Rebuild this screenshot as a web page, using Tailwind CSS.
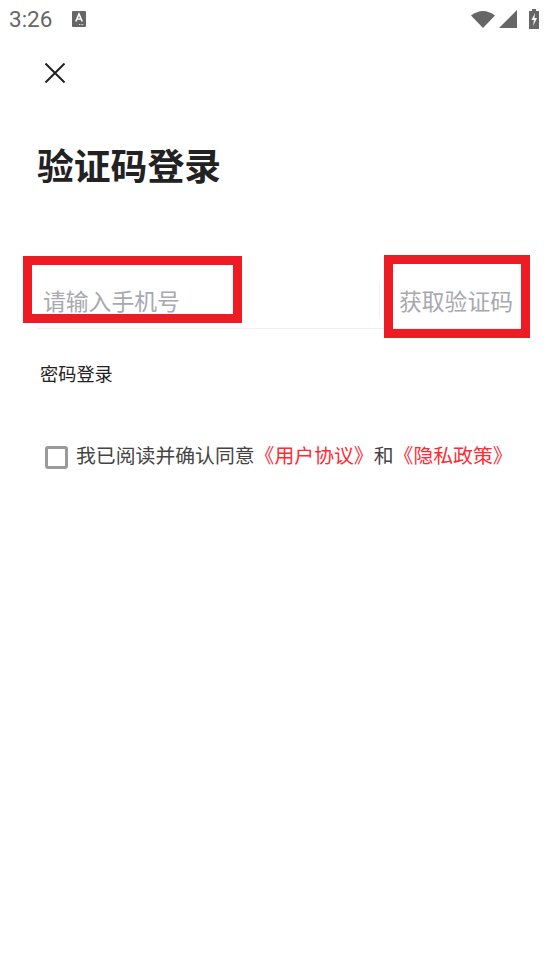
<!DOCTYPE html>
<html lang="zh"><head><meta charset="utf-8">
<script src="https://cdn.jsdelivr.net/npm/@tailwindcss/browser@4"></script>
</head>
<body class="bg-white">
<div class="relative w-[550px] h-[979px] overflow-hidden bg-white font-['Roboto','Noto_Sans_CJK_SC',sans-serif]">
  <div class="h-[38px] flex items-center pl-[9px] pr-[11px] text-[#666666]">
    <span class="text-[22.500px] leading-[38px] w-[63px]">3:26</span>
    <svg width="14" height="16" viewBox="0 0 14 16" class="mt-[-1px]"><rect width="14" height="16" rx="1" fill="#666"/><path d="M3.800 10.500 7 3l3.200 7.500M5 8h4" fill="none" stroke="#fff" stroke-width="1.600"/><path d="M7 13.500h5" stroke="#ddd" stroke-width="1.200" stroke-dasharray="1 .6"/></svg>
    <div class="ml-auto flex items-center gap-[4px]">
      <svg width="24" height="18" viewBox="0 0 24 18"><path d="M0 5.500Q12-3.500 24 5.500L12 18Z" fill="#666"/></svg>
      <svg width="18" height="18" viewBox="0 0 18 18"><path d="M0 18 18 0V18Z" fill="#666"/></svg>
      <svg width="10" height="20" viewBox="0 0 10 20" class="ml-[8px]"><path d="M3 0h4v2h3v18H0V2h3Z" fill="#666"/><path d="M6 4 2.500 11H5L4 17 8 9H5.400Z" fill="#fff"/></svg>
    </div>
  </div>
  <div class="h-[70px] pl-[45px] pt-[25px]">
    <svg width="20" height="20" viewBox="0 0 20 20"><path d="M.5.500 19.500 19.500M19.500.500.5 19.500" stroke="#222" stroke-width="2" fill="none"/></svg>
  </div>
  <h1 class="pl-[37px] pt-[35px] text-[36.800px] leading-[50px] font-bold text-[#222222] h-[113px]">验证码登录</h1>
  <div class="ml-[37px] mt-[62px] h-[46px] flex items-center border-b border-[#f0f0f0] mr-[20px]">
    <span class="pl-[6px] mb-[6px] text-[22.800px] leading-[30px] text-[#a8a9ae] flex-1">请输入手机号</span>
    <span class="w-px h-[33px] bg-[#f2f2f2] mt-[-11px]"></span>
    <span class="ml-[19px] mb-[6px] mr-[17px] text-[22.800px] leading-[30px] text-[#a8a9ae] whitespace-nowrap">获取验证码</span>
  </div>
  <p class="pl-[40px] mt-[33px] text-[18.200px] leading-[26px] text-[#222222]">密码登录</p>
  <div class="pl-[45px] mt-[55px] flex items-center">
    <span class="w-[23px] h-[23px] border-[3px] border-[#9a9a9a] rounded-[3px]"></span>
    <p class="ml-[8px] text-[19.850px] leading-[28px] text-[#444444] whitespace-nowrap">我已阅读并确认同意<span class="text-[#ff2a35]">《用户协议》</span>和<span class="text-[#ff2a35]">《隐私政策》</span></p>
  </div>
  <div class="absolute left-[23px] top-[256px] w-[219px] h-[67px] border-[9px] border-[#ed1c24]"></div>
  <div class="absolute left-[384px] top-[255px] w-[146px] h-[83px] border-[9px] border-[#ed1c24]"></div>
</div>
</body></html>
